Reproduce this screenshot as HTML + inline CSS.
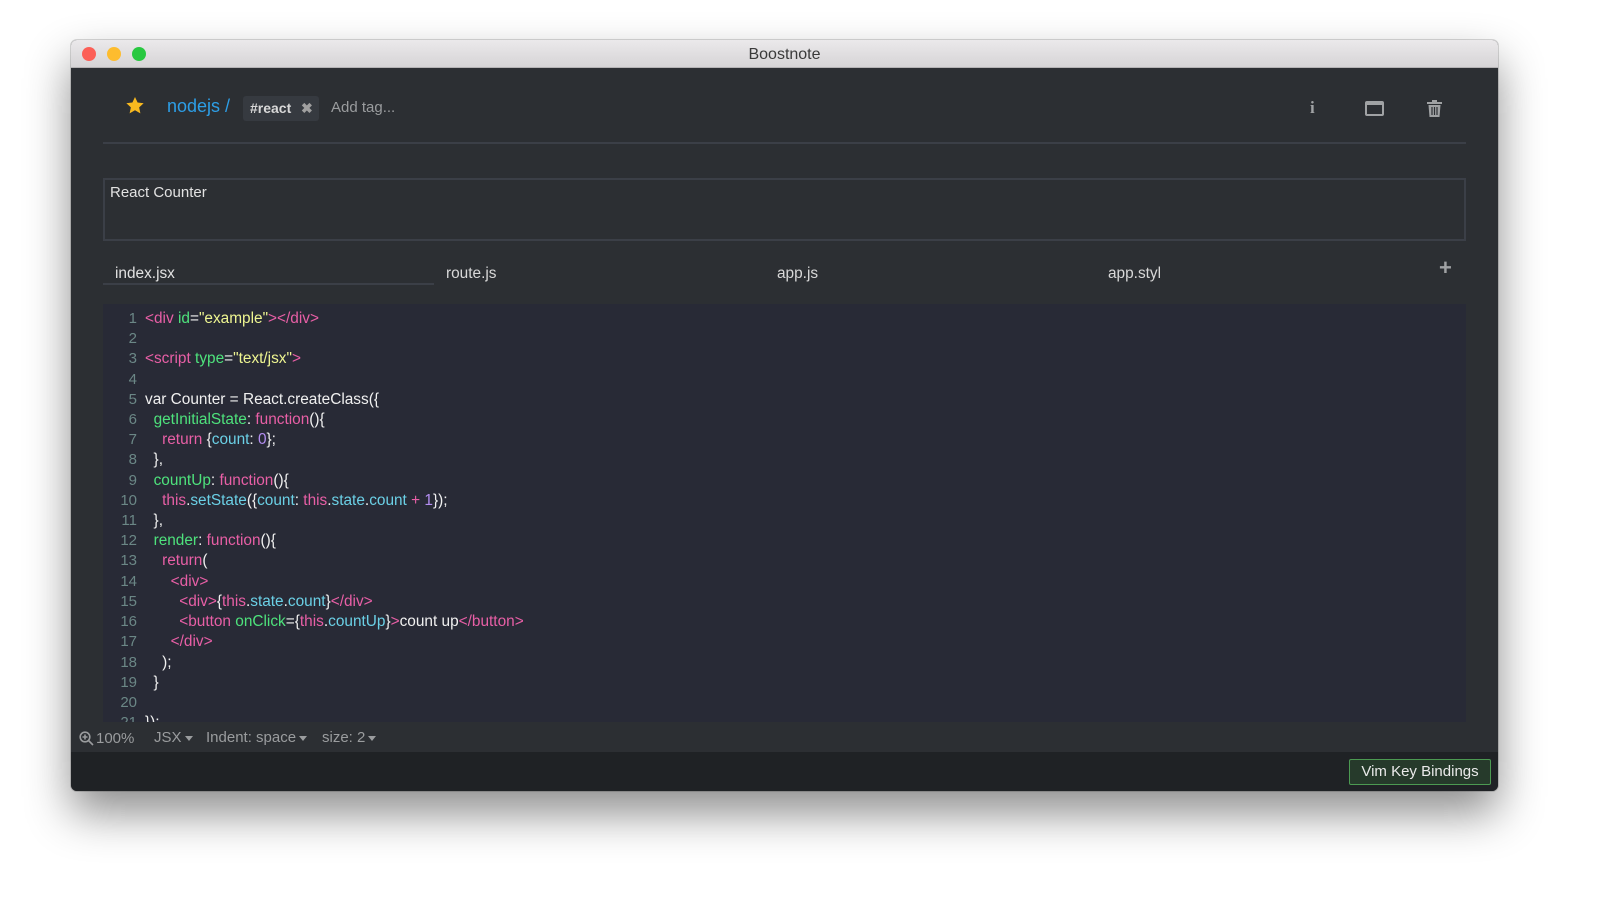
<!DOCTYPE html>
<html><head><meta charset="utf-8"><style>
*{margin:0;padding:0;box-sizing:border-box}
body{width:1600px;height:910px;background:#fff;position:relative;overflow:hidden;font-family:"Liberation Sans",sans-serif}
.win{position:absolute;left:71px;top:40px;width:1427px;height:751px;border-radius:6px;overflow:hidden;background:#2c2f33;box-shadow:0 22px 45px rgba(0,0,0,.45),0 0 0 1px rgba(0,0,0,.15)}
.tb{position:absolute;left:0;top:0;right:0;height:28px;background:linear-gradient(#ebe9eb,#d6d4d6);border-bottom:1px solid #b5b3b5;text-align:center;font-size:16px;line-height:29px;color:#3a3a3a}
.dot{position:absolute;top:7px;width:14px;height:14px;border-radius:50%}
.abs{position:absolute}
.code{position:absolute;left:32px;top:264px;width:1363px;height:418px;background:#282a36;overflow:hidden}
.ln{position:absolute;left:0;width:34px;text-align:right;color:#6b8786;font-size:15px}
.cl{position:absolute;left:42px;white-space:pre;font-size:15.4px;color:#f0f0f0}
.p{color:#e85fa6}.g{color:#4ee27c}.y{color:#eef591}.c{color:#6bd0e6}.v{color:#b48ef2}.w{color:#f0f0f0}
.tab{position:absolute;top:225px;font-size:15.4px;color:#d8d8d8}
.st{position:absolute;left:0;top:684px;width:100%;height:28px;background:#2c2f33;font-size:15px;color:#9a9c9e}
.bot{position:absolute;left:0;top:712px;width:100%;height:39px;background:#1f2225}
.caret{display:inline-block;width:0;height:0;border-left:4px solid transparent;border-right:4px solid transparent;border-top:5px solid #9a9c9e;vertical-align:middle;margin-left:3px}
</style></head><body>
<div class="win">
 <div class="tb">Boostnote
  <div class="dot" style="left:11px;background:#fc5f57"></div>
  <div class="dot" style="left:36px;background:#fdbc2e"></div>
  <div class="dot" style="left:61px;background:#28c840"></div>
 </div>
 <svg class="abs" style="left:55px;top:57px" width="18" height="17" viewBox="0 0 24 23"><path d="M12 0l3.5 7.5 8.2.9-6.1 5.6 1.7 8.1L12 18l-7.3 4.1 1.7-8.1L.3 8.4l8.2-.9z" fill="#f8b91f"/></svg>
 <div class="abs" style="left:96px;top:56px;font-size:18px;color:#2d9ee6">nodejs /</div>
 <div class="abs" style="left:172px;top:56px;width:76px;height:25px;background:#363a40;border-radius:3px;font-size:14px;font-weight:bold;color:#d8d8d8;line-height:24px;padding-left:7px">#react<span style="position:absolute;left:58px;color:#a0a0a0">✖</span></div>
 <div class="abs" style="left:260px;top:59px;font-size:15px;color:#9a9c9e">Add tag...</div>
 <div class="abs" style="left:1239px;top:58px;font-size:17px;font-weight:bold;color:#a0a2a4;font-family:'Liberation Serif',serif">i</div>
 <div class="abs" style="left:1294px;top:61px;width:19px;height:15px;border:2px solid #a0a2a4;border-top-width:4px;border-radius:2px"></div>
 <svg class="abs" style="left:1356px;top:60px" width="15" height="17" viewBox="0 0 15 17"><rect x="0" y="2" width="15" height="2" fill="#a0a2a4"/><rect x="5" y="0" width="5" height="2" fill="#a0a2a4"/><path d="M1.5 5h12l-1 12h-10z" fill="#a0a2a4"/><path d="M5 7v8M7.5 7v8M10 7v8" stroke="#2c2f33" stroke-width="1.2"/></svg>
 <div class="abs" style="left:32px;top:102px;width:1363px;height:2px;background:#3b3f47"></div>
 <div class="abs" style="left:32px;top:138px;width:1363px;height:63px;border:2px solid #3b3f47"></div>
 <div class="abs" style="left:39px;top:144px;font-size:15px;color:#e2e2e2">React Counter</div>
 <div class="tab" style="left:44px;color:#e2e2e2">index.jsx</div>
 <div class="abs" style="left:32px;top:243px;width:331px;height:2px;background:#3b3f47"></div>
 <div class="tab" style="left:375px">route.js</div>
 <div class="tab" style="left:706px">app.js</div>
 <div class="tab" style="left:1037px">app.styl</div>
 <div class="abs" style="left:1368px;top:215px;font-size:22px;font-weight:bold;color:#a0a2a4">+</div>
 <div class="code">
  <div class="ln" style="top:6px">1</div><div class="cl" style="top:6px"><span class="p">&lt;div</span> <span class="g">id</span>=<span class="y">"example"</span><span class="p">&gt;&lt;/div&gt;</span></div>
  <div class="ln" style="top:26px">2</div>
  <div class="ln" style="top:46px">3</div><div class="cl" style="top:46px"><span class="p">&lt;script</span> <span class="g">type</span>=<span class="y">"text/jsx"</span><span class="p">&gt;</span></div>
  <div class="ln" style="top:67px">4</div>
  <div class="ln" style="top:87px">5</div><div class="cl" style="top:87px">var Counter = React.createClass({</div>
  <div class="ln" style="top:107px">6</div><div class="cl" style="top:107px">  <span class="g">getInitialState</span>: <span class="p">function</span>(){</div>
  <div class="ln" style="top:127px">7</div><div class="cl" style="top:127px">    <span class="p">return</span> {<span class="c">count</span>: <span class="v">0</span>};</div>
  <div class="ln" style="top:147px">8</div><div class="cl" style="top:147px">  },</div>
  <div class="ln" style="top:168px">9</div><div class="cl" style="top:168px">  <span class="g">countUp</span>: <span class="p">function</span>(){</div>
  <div class="ln" style="top:188px">10</div><div class="cl" style="top:188px">    <span class="p">this</span>.<span class="c">setState</span>({<span class="c">count</span>: <span class="p">this</span>.<span class="c">state</span>.<span class="c">count</span> <span class="p">+</span> <span class="v">1</span>});</div>
  <div class="ln" style="top:208px">11</div><div class="cl" style="top:208px">  },</div>
  <div class="ln" style="top:228px">12</div><div class="cl" style="top:228px">  <span class="g">render</span>: <span class="p">function</span>(){</div>
  <div class="ln" style="top:248px">13</div><div class="cl" style="top:248px">    <span class="p">return</span>(</div>
  <div class="ln" style="top:269px">14</div><div class="cl" style="top:269px">      <span class="p">&lt;div&gt;</span></div>
  <div class="ln" style="top:289px">15</div><div class="cl" style="top:289px">        <span class="p">&lt;div&gt;</span>{<span class="p">this</span>.<span class="c">state</span>.<span class="c">count</span>}<span class="p">&lt;/div&gt;</span></div>
  <div class="ln" style="top:309px">16</div><div class="cl" style="top:309px">        <span class="p">&lt;button</span> <span class="g">onClick</span>={<span class="p">this</span>.<span class="c">countUp</span>}<span class="p">&gt;</span>count up<span class="p">&lt;/button&gt;</span></div>
  <div class="ln" style="top:329px">17</div><div class="cl" style="top:329px">      <span class="p">&lt;/div&gt;</span></div>
  <div class="ln" style="top:350px">18</div><div class="cl" style="top:350px">    );</div>
  <div class="ln" style="top:370px">19</div><div class="cl" style="top:370px">  }</div>
  <div class="ln" style="top:390px">20</div>
  <div class="ln" style="top:410px">21</div><div class="cl" style="top:410px">});</div>
 </div>
 <div class="st">
  <svg class="abs" style="left:8px;top:7px" width="15" height="15" viewBox="0 0 15 15"><circle cx="6" cy="6" r="4.8" fill="none" stroke="#9a9c9e" stroke-width="1.6"/><path d="M9.5 9.5l4.5 4.5M6 3.5v5M3.5 6h5" stroke="#9a9c9e" stroke-width="1.6"/></svg>
  <span class="abs" style="left:25px;top:6px">100%</span>
  <span class="abs" style="left:83px;top:5px">JSX<span class="caret"></span></span>
  <span class="abs" style="left:135px;top:5px">Indent: space<span class="caret"></span></span>
  <span class="abs" style="left:251px;top:5px">size: 2<span class="caret"></span></span>
 </div>
 <div class="bot">
  <div class="abs" style="left:1278px;top:7px;width:142px;height:26px;background:#263a2b;border:1px solid #4c9a52;border-radius:2px;color:#eaeaea;font-size:15px;text-align:center;line-height:24px">Vim Key Bindings</div>
 </div>
</div>
</body></html>
